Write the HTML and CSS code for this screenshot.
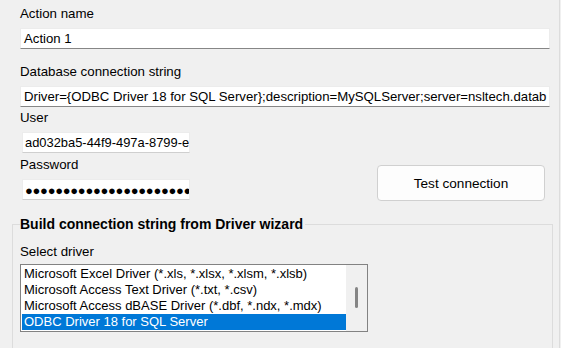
FILE: index.html
```html
<!DOCTYPE html>
<html>
<head>
<meta charset="utf-8">
<link rel="stylesheet" href="styles.css">
</head>
<body>
<div class="page">
  <div class="label">Action name</div>
  <div class="field wide f1">Action 1</div>
  <div class="label l2">Database connection string</div>
  <div class="field wide f2">Driver={ODBC Driver 18 for SQL Server};description=MySQLServer;server=nsltech.datab</div>
  <div class="creds">
    <div class="credcol">
      <div class="label l3">User</div>
      <div class="field small user">ad032ba5-44f9-497a-8799-e</div>
      <div class="label l4">Password</div>
      <div class="field small pw">●●●●●●●●●●●●●●●●●●●●●●</div>
    </div>
    <button class="btn">Test connection</button>
  </div>
  <fieldset class="group">
    <legend class="gtitle">Build connection string from Driver wizard</legend>
    <div class="label l5">Select driver</div>
    <div class="listbox">
      <div class="items">
        <div class="item">Microsoft Excel Driver (*.xls, *.xlsx, *.xlsm, *.xlsb)</div>
        <div class="item">Microsoft Access Text Driver (*.txt, *.csv)</div>
        <div class="item">Microsoft Access dBASE Driver (*.dbf, *.ndx, *.mdx)</div>
        <div class="item sel">ODBC Driver 18 for SQL Server</div>
      </div>
      <div class="scroll"><div class="thumb"></div></div>
    </div>
  </fieldset>
</div>
</body>
</html>
```
FILE: styles.css
```css
html, body { margin: 0; padding: 0; overflow: hidden; }
body {
  background: #f0f0f0;
  font-family: "Liberation Sans", Arial, sans-serif;
  color: #000;
  width: 561px;
  height: 348px;
}
.page {
  box-sizing: border-box;
  width: 560px;
  height: 348px;
  padding: 5px 0 0 12px;
  border-right: 1px solid #dcdcdc;
  overflow: hidden;
}
.label {
  font-size: 13.3px;
  line-height: 18px;
  height: 18px;
  margin-left: 8px;
}
.field {
  box-sizing: border-box;
  background: #fff;
  font-size: 13.2px;
  line-height: 18px;
  white-space: nowrap;
  overflow: hidden;
}
.wide {
  margin-left: 8px;
  width: 530px;
  height: 21px;
  border: 1px solid #ececec;
  border-bottom: 1px solid #868686;
  padding: 1px 0 0 3px;
  margin-top: 5px;
}
.l2 { margin-top: 14px; }
.creds {
  display: flex;
  align-items: flex-end;
}
.credcol { display: flex; flex-direction: column; }
.l3 { margin-top: 2px; }
.l4 { margin-top: 3px; }
.small {
  margin-left: 10px;
  width: 168px;
  height: 21px;
  border: 1px solid #ececec;
  border-bottom: 1px solid #cfcfcf;
  padding: 1px 0 0 2px;
  margin-top: 5px;
}
.user { font-size: 12.9px; }
.pw { font-size: 13px; letter-spacing: -0.3px; line-height: 19px; }
.btn {
  margin-left: 187px;
  width: 168px;
  height: 36px;
  margin-bottom: -1px;
  background: #fdfdfd;
  border: 1px solid #d0d0d0;
  border-radius: 4px;
  font-family: "Liberation Sans", Arial, sans-serif;
  font-size: 13.6px;
  color: #000;
  padding: 0;
}
.group {
  margin: 15px 0 0 0;
  width: 541px;
  box-sizing: border-box;
  height: 133px;
  border: 1px solid #dcdcdc;
  border-bottom: none;
  padding: 0 0 0 7px;
}
.gtitle {
  font-weight: bold;
  font-size: 14px;
  line-height: 18px;
  padding: 0 2px 0 0;
}
.l5 { margin-top: 10px; margin-left: 0; }
.listbox {
  margin-top: 3px;
  width: 348px;
  height: 68px;
  box-sizing: border-box;
  border: 1px solid #828282;
  background: #fff;
  display: flex;
  padding: 1px 0 1px 1px;
}
.items { flex: 1; }
.item {
  height: 16px;
  line-height: 16px;
  font-size: 13px;
  padding-left: 2px;
  white-space: nowrap;
  overflow: hidden;
}
.sel { background: #0078d7; color: #fff; }
.scroll {
  width: 21px;
  margin: -1px 0 -1px 0;
  background: #f0f0f0;
  display: flex;
  justify-content: center;
  padding-top: 22px;
  box-sizing: border-box;
}
.thumb {
  width: 3px;
  height: 21px;
  background: #858585;
  border-radius: 2px;
}
```
